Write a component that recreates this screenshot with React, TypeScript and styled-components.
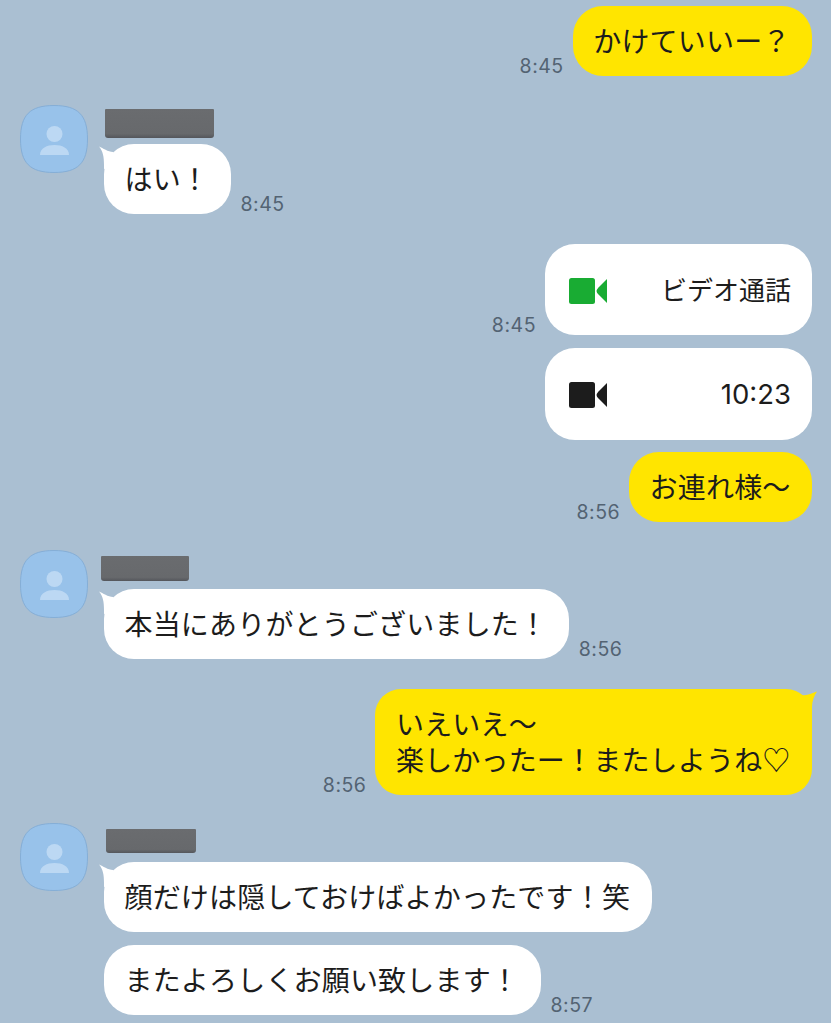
import React from 'react';
import styled, { createGlobalStyle } from 'styled-components';

const GlobalStyle = createGlobalStyle`
  html, body {
    margin: 0;
    padding: 0;
    background: #aabfd2;
  }
  body {
    font-family: "Noto Sans CJK JP", "Noto Sans", sans-serif;
    color: #1c1c1c;
    overflow: hidden;
  }
`;

const Thread = styled.div`
  display: flex;
  flex-direction: column;
  width: 831px;
  height: 1023px;
  padding: 6px 19px 0 20px;
  box-sizing: border-box;
  overflow: hidden;
`;

const Row = styled.div<{ $top?: number }>`
  display: flex;
  justify-content: flex-end;
  align-items: flex-end;
  gap: 9px;
  margin-top: ${(p) => p.$top ?? 0}px;
`;

const IncomingGroup = styled.div<{ $top: number }>`
  display: flex;
  align-items: flex-start;
  gap: 16px;
  margin-top: ${(p) => p.$top}px;
`;

const AvatarIcon = styled.svg`
  flex: none;
  width: 68px;
  height: 68px;
`;

const Column = styled.div`
  display: flex;
  flex-direction: column;
  gap: 13px;
`;

const NameBar = styled.div<{ $w: number; $h: number; $x: number; $above: number; $below: number }>`
  width: ${(p) => p.$w}px;
  height: ${(p) => p.$h}px;
  margin: ${(p) => p.$above}px 0 ${(p) => p.$below - 13}px ${(p) => p.$x}px;
  border-radius: 1px 1px 3px 3px;
  background: linear-gradient(#6a6c6f, #67696c 85%, #54565b);
`;

const Line = styled.div`
  display: flex;
  align-items: flex-end;
  gap: 10px;
`;

const Bubble = styled.div<{ $mine?: boolean; $wrap?: boolean }>`
  position: relative;
  box-sizing: border-box;
  padding: ${(p) => (p.$wrap ? '16px 21.5px 18px 20.5px' : '0 21.5px 2px 20.5px')};
  min-height: 70px;
  display: flex;
  align-items: center;
  border-radius: ${(p) => (p.$wrap ? '26px' : '30px')};
  background: ${(p) => (p.$mine ? '#ffe500' : '#ffffff')};
  font-size: 28px;
  letter-spacing: 0.18px;
  line-height: 36px;
  white-space: pre;
`;

const CallBubble = styled.div<{ $h: number }>`
  display: flex;
  align-items: center;
  justify-content: space-between;
  box-sizing: border-box;
  width: 267px;
  height: ${(p) => p.$h}px;
  padding: 0 21px 0 24px;
  border-radius: 30px;
  background: #ffffff;
`;

const CallLabel = styled.span`
  font-size: 26px;
  margin-bottom: 3px;
`;

const CallDuration = styled.span`
  font-family: "Inter", "Liberation Sans", sans-serif;
  font-size: 27.5px;
`;

const VideoGlyph = styled.svg`
  flex: none;
  width: 38px;
  height: 26px;
  margin-top: 2px;
`;

const Time = styled.span`
  flex: none;
  font-family: "Inter", "Liberation Sans", sans-serif;
  font-size: 19.5px;
  line-height: 20px;
  letter-spacing: 0.5px;
  color: #536373;
`;

const TailIn = styled.svg`
  position: absolute;
  left: -7px;
  top: 1px;
  width: 24px;
  height: 24px;
`;

const TailOut = styled.svg`
  position: absolute;
  right: -6px;
  top: 1px;
  width: 24px;
  height: 24px;
`;

const Avatar = () => (
  <AvatarIcon viewBox="0 0 68 68">
    <path
      d="M34 .5C58 .5 67.500 10 67.500 34S58 67.500 34 67.500 .5 58 .5 34 10 .5 34 .5Z"
      fill="#98c2ea"
      stroke="#85aed6"
    />
    <circle cx="34.500" cy="29" r="8" fill="#bcd8f3" />
    <path d="M20 50c0-7 7-10 14.500-10S49 43 49 50Z" fill="#bcd8f3" />
  </AvatarIcon>
);

const VideoIcon = ({ color }: { color: string }) => (
  <VideoGlyph viewBox="0 0 38 26" fill={color}>
    <rect x="0" y="0" width="26" height="26" rx="2.500" />
    <path d="M38 1v24l-8.500-8.500Q27.500 14.500 27.500 13t2-3.500Z" />
  </VideoGlyph>
);

const IncomingTail = () => (
  <TailIn viewBox="0 0 24 24">
    <path d="M2 1.500C6 3 11 7 16 7L24 20 7 24V20C7 12 6 6 2 1.500Z" fill="#ffffff" />
  </TailIn>
);

const OutgoingTail = () => (
  <TailOut viewBox="0 0 24 24">
    <path d="M23 1.500C19 3 13 6 8 5L0 18 18 24V17C18 11 20 6 23 1.500Z" fill="#ffe500" />
  </TailOut>
);

export default function App() {
  return (
    <>
      <GlobalStyle />
      <Thread>
        <Row>
          <Time>8:45</Time>
          <Bubble $mine>かけていいー？</Bubble>
        </Row>

        <IncomingGroup $top={28.5}>
          <Avatar />
          <Column>
            <NameBar $w={109} $h={29} $x={1} $above={4.5} $below={5.5} />
            <Line>
              <Bubble>
                <IncomingTail />
                はい！
              </Bubble>
              <Time>8:45</Time>
            </Line>
          </Column>
        </IncomingGroup>

        <Row $top={30.5}>
          <Time>8:45</Time>
          <CallBubble $h={91}>
            <VideoIcon color="#19ac33" />
            <CallLabel>ビデオ通話</CallLabel>
          </CallBubble>
        </Row>
        <Row $top={13}>
          <CallBubble $h={92}>
            <VideoIcon color="#1c1c1c" />
            <CallDuration>10:23</CallDuration>
          </CallBubble>
        </Row>
        <Row $top={12}>
          <Time>8:56</Time>
          <Bubble $mine>お連れ様〜</Bubble>
        </Row>

        <IncomingGroup $top={28}>
          <Avatar />
          <Column>
            <NameBar $w={88} $h={25} $x={-3} $above={6} $below={8} />
            <Line>
              <Bubble>
                <IncomingTail />
                本当にありがとうございました！
              </Bubble>
              <Time>8:56</Time>
            </Line>
          </Column>
        </IncomingGroup>

        <Row $top={30}>
          <Time>8:56</Time>
          <Bubble $mine $wrap>
            <OutgoingTail />
            <span>{'いえいえ〜\n楽しかったー！またしようね♡'}</span>
          </Bubble>
        </Row>

        <IncomingGroup $top={28}>
          <Avatar />
          <Column>
            <NameBar $w={90} $h={24} $x={2} $above={6} $below={9} />
            <Line>
              <Bubble>
                <IncomingTail />
                顔だけは隠しておけばよかったです！笑
              </Bubble>
            </Line>
            <Line>
              <Bubble>またよろしくお願い致します！</Bubble>
              <Time>8:57</Time>
            </Line>
          </Column>
        </IncomingGroup>
      </Thread>
    </>
  );
}
